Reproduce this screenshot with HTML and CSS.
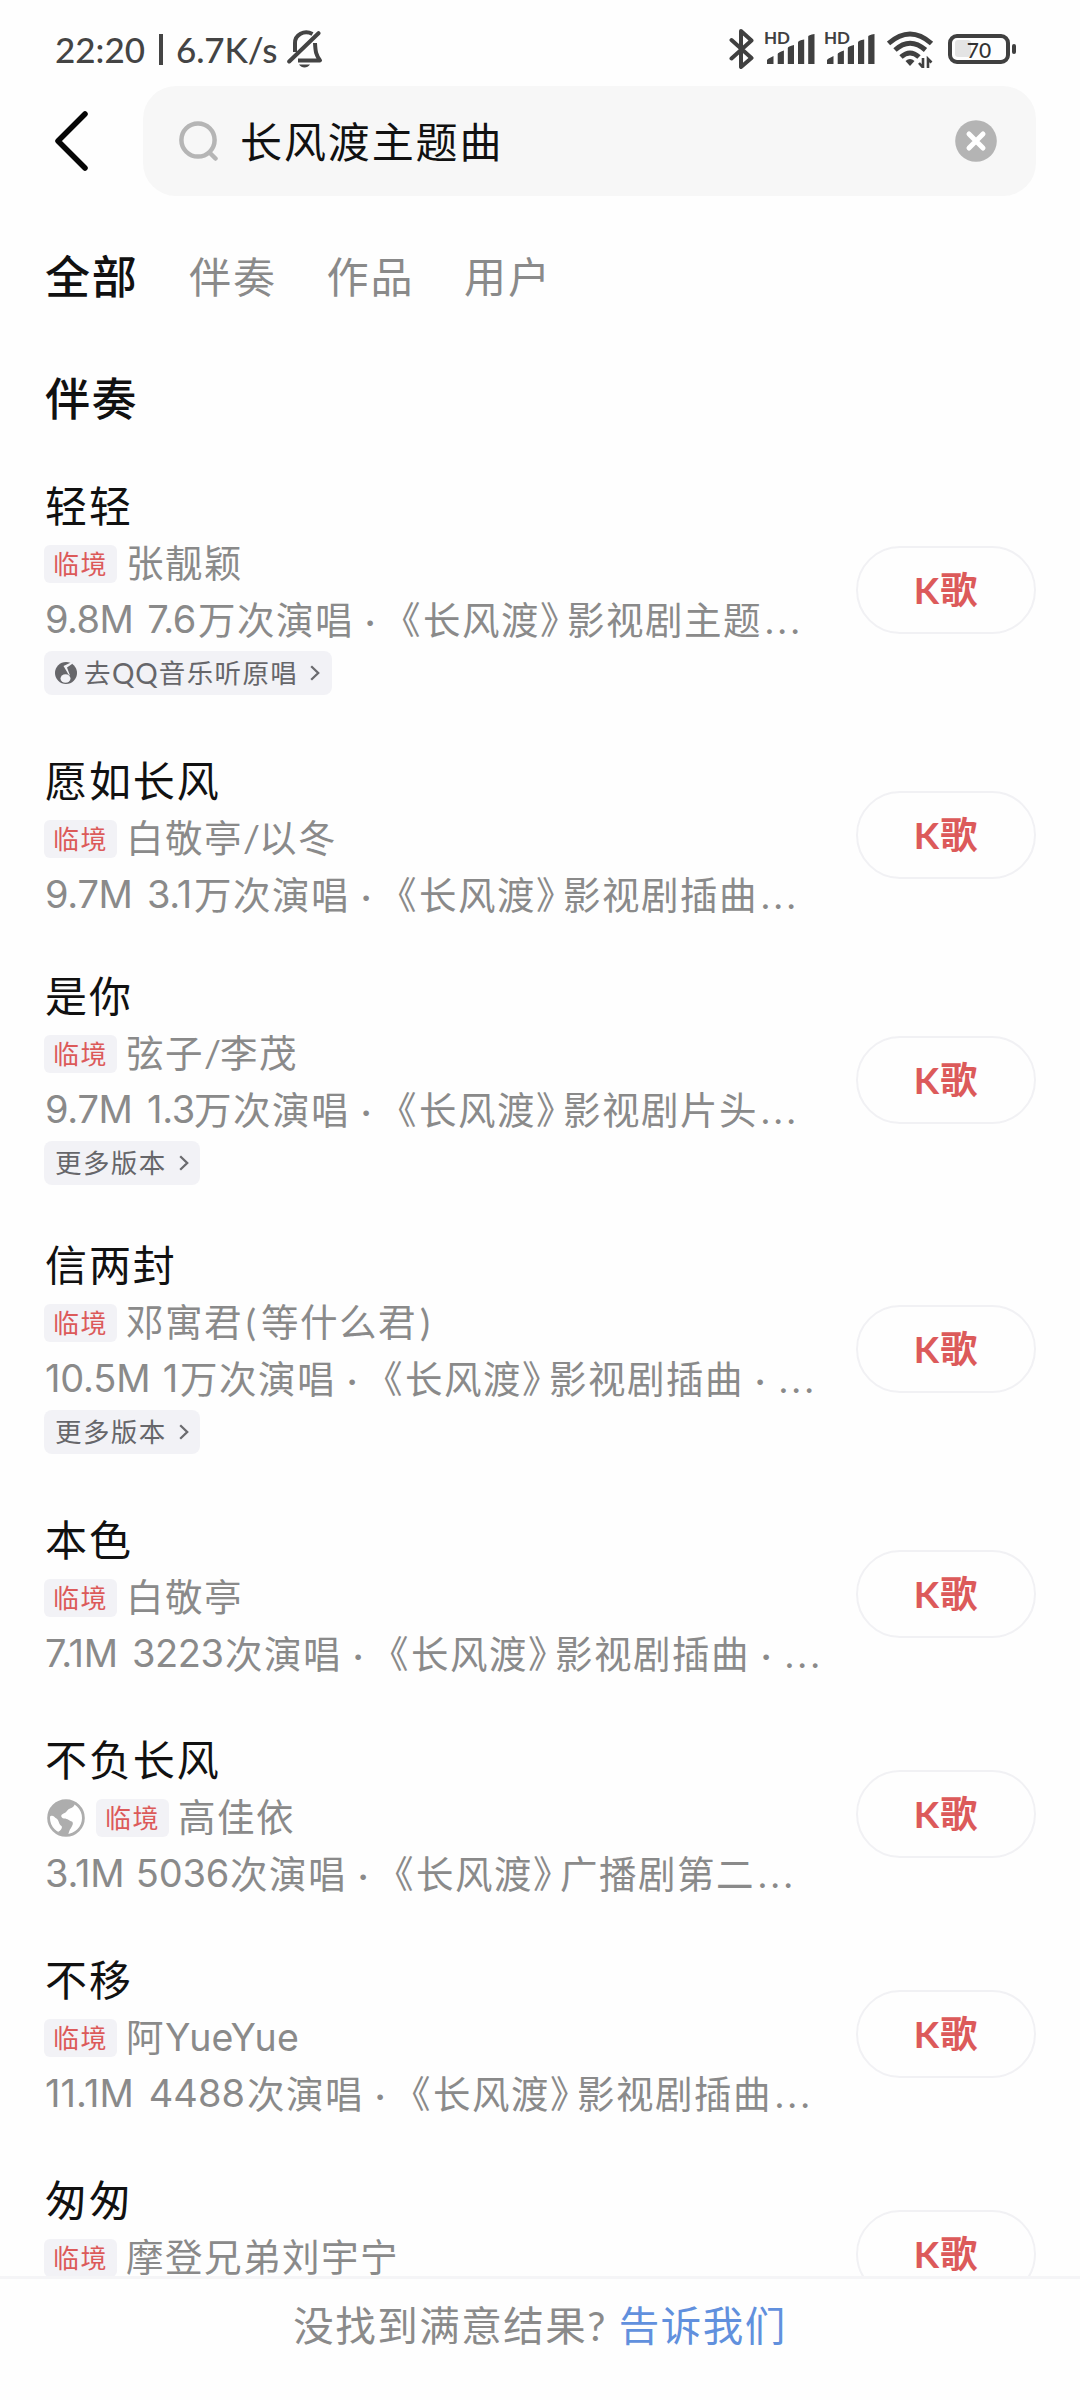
FILE: index.html
```html
<!DOCTYPE html>
<html lang="zh-CN">
<head>
<meta charset="utf-8">
<title>长风渡主题曲</title>
<link rel="stylesheet" href="styles.css">
</head>
<body>
<svg class="defs" width="0" height="0" aria-hidden="true">
  <symbol id="bars" viewBox="0 0 48 30">
    <path d="M0 30V26Q0 25 6.500 22V30ZM10.700 30V20Q10.700 18.500 16.900 16.500V30ZM20.800 30V14Q20.800 12.500 27 11V30ZM31 30V8.500Q31 6.500 37.200 5.500V30ZM41.200 30V2.500Q41.200 1 47.500 0V30Z" fill="#404040"/>
  </symbol>
  <symbol id="chev" viewBox="0 0 10 16"><path d="M1.200 1.200L8.200 8L1.200 14.800" fill="none" stroke="#6b6b6f" stroke-width="2.300"/></symbol>
</svg>
<div class="screen">
  <header class="status">
    <span class="clock">22:20</span><span class="bar"></span><span class="speed">6.7K/s</span>
    <svg class="bell" width="36" height="38" viewBox="0 0 36 38" fill="none" stroke="#444" stroke-width="4">
      <path d="M2.200 31.500L31.500 3.200" stroke-linecap="round"/>
      <path d="M8 22V13C8 5 17 -.5 25.500 4"/>
      <path d="M28 13C28.500 22 29 25 33 30.500H11" stroke-linejoin="round"/>
      <path d="M12 34.500H23C20.500 38.500 14.500 38.500 12 34.500Z" fill="#444" stroke="none"/>
    </svg>
    <span class="fill"></span>
    <svg class="bt" width="26" height="40" viewBox="0 0 26 40" fill="none" stroke="#404040" stroke-width="4" stroke-linejoin="round" stroke-linecap="round"><path d="M2.500 11L22.500 29L12 38V2L22.500 11.500L2.500 29.500"/></svg>
    <span class="signal"><b class="hd">HD</b><svg width="48" height="30"><use href="#bars"/></svg></span>
    <span class="signal"><b class="hd">HD</b><svg width="48" height="30"><use href="#bars"/></svg></span>
    <svg class="wifi" width="47" height="37" viewBox="0 0 47 37" fill="none" stroke="#404040" stroke-width="5">
      <path d="M1.500 12.500Q23 -6.500 44.500 12.500"/><path d="M8 19Q23 5.500 38.500 19"/><path d="M14 26Q23 18 32 26"/>
      <path d="M18.500 30Q23 26 27.500 30L23 35Z" fill="#404040" stroke="none"/>
      <path d="M36 27V36.500L32 32M41 37V28L44.500 31.500" stroke-width="2.600"/>
    </svg>
    <span class="battery"><i class="level"></i><b class="pct">70</b></span><i class="nub"></i>
  </header>

  <div class="searchbar">
    <svg class="back" width="36" height="62" viewBox="0 0 36 62"><path d="M31 4L4 31L31 58" fill="none" stroke="#060606" stroke-width="5.500" stroke-linecap="round" stroke-linejoin="round"/></svg>
    <div class="field">
      <svg width="40" height="40" viewBox="0 0 40 40" fill="none" stroke="#b5b5b5" stroke-width="4.500" stroke-linecap="round"><circle cx="19" cy="19" r="16.600"/><path d="M31 32L36.500 37.500"/></svg>
      <span class="query">长风渡主题曲</span>
      <svg width="42" height="42" viewBox="0 0 42 42"><circle cx="21" cy="21" r="20.800" fill="#b4b4b4"/><path d="M14 14L28 28M28 14L14 28" stroke="#fff" stroke-width="5" stroke-linecap="round"/></svg>
    </div>
  </div>

  <nav class="tabs"><span class="tab active">全部</span><span class="tab">伴奏</span><span class="tab">作品</span><span class="tab">用户</span></nav>
  <h2 class="section">伴奏</h2>

  <main class="list">
    <article class="item linked near">
      <div class="info">
        <h3 class="title">轻轻</h3>
        <div class="singer"><span class="badge">临境</span><span>张靓颖</span></div>
        <p class="meta"><span class="num a">9.8M 7.6</span>万次演唱<span class="dot">·</span><span class="lq">《</span>长风渡<span class="rq">》</span>影视剧主题<span class="more">...</span></p>
        <span class="link"><svg class="qq" width="22" height="22" viewBox="0 0 22 22"><circle cx="11" cy="11" r="11" fill="#66666a"/><path d="M17 0L8.500 4L13.500 12.500L15 13.500L12 5.500L17 2Z" fill="#f2f2f6"/><ellipse cx="10.500" cy="16.500" rx="5" ry="4.300" fill="#f2f2f6"/></svg>去<span class="lat">QQ</span>音乐听原唱<svg class="chev" width="10" height="16"><use href="#chev"/></svg></span>
      </div>
      <button class="sing">K歌</button>
    </article>
    <article class="item near">
      <div class="info">
        <h3 class="title">愿如长风</h3>
        <div class="singer"><span class="badge">临境</span><span>白敬亭<span class="slash">/</span>以冬</span></div>
        <p class="meta"><span class="num b">9.7M 3.1</span>万次演唱<span class="dot">·</span><span class="lq">《</span>长风渡<span class="rq">》</span>影视剧插曲<span class="more">...</span></p>
      </div>
      <button class="sing">K歌</button>
    </article>
    <article class="item linked close">
      <div class="info">
        <h3 class="title">是你</h3>
        <div class="singer"><span class="badge">临境</span><span>弦子<span class="slash">/</span>李茂</span></div>
        <p class="meta"><span class="num b">9.7M 1.3</span>万次演唱<span class="dot">·</span><span class="lq">《</span>长风渡<span class="rq">》</span>影视剧片头<span class="more">...</span></p>
        <span class="link more-link">更多版本<svg class="chev" width="10" height="16"><use href="#chev"/></svg></span>
      </div>
      <button class="sing">K歌</button>
    </article>
    <article class="item linked near">
      <div class="info">
        <h3 class="title">信两封</h3>
        <div class="singer"><span class="badge">临境</span><span>邓寓君<span class="paren">(</span>等什么君<span class="paren">)</span></span></div>
        <p class="meta"><span class="num c">10.5M 1</span>万次演唱<span class="dot">·</span><span class="lq">《</span>长风渡<span class="rq">》</span>影视剧插曲<span class="dot">·</span><span class="more">...</span></p>
        <span class="link more-link">更多版本<svg class="chev" width="10" height="16"><use href="#chev"/></svg></span>
      </div>
      <button class="sing">K歌</button>
    </article>
    <article class="item">
      <div class="info">
        <h3 class="title">本色</h3>
        <div class="singer"><span class="badge">临境</span><span>白敬亭</span></div>
        <p class="meta"><span class="num d">7.1M 3223</span>次演唱<span class="dot">·</span><span class="lq">《</span>长风渡<span class="rq">》</span>影视剧插曲<span class="dot">·</span><span class="more">...</span></p>
      </div>
      <button class="sing">K歌</button>
    </article>
    <article class="item">
      <div class="info">
        <h3 class="title">不负长风</h3>
        <div class="singer"><svg class="globe" width="38" height="38" viewBox="0 0 38 38"><circle cx="19" cy="19" r="17.400" fill="#fff" stroke="#adadad" stroke-width="2.800"/><path d="M2 18C2 8 9 1.500 18 1.500C23 1.500 26 3 28 4.500Q27 8.500 23 9.500C20 10.500 20 13.500 16.500 14.500C13 16 14 19 17 19.500C21 19.500 22 22 25 22.500C27 24.500 25 27 24 29C22 31 22 35 20 37Q14 36 11 33C13 32 16 29 14.500 27C11.500 25 12 21 9.500 19.500C7 18 6 15 2 18Z" fill="#adadad"/></svg><span class="badge">临境</span><span>高佳依</span></div>
        <p class="meta"><span class="num e">3.1M 5036</span>次演唱<span class="dot">·</span><span class="lq">《</span>长风渡<span class="rq">》</span>广播剧第二<span class="more">...</span></p>
      </div>
      <button class="sing">K歌</button>
    </article>
    <article class="item">
      <div class="info">
        <h3 class="title">不移</h3>
        <div class="singer"><span class="badge">临境</span><span>阿<span class="latin-name">YueYue</span></span></div>
        <p class="meta"><span class="num f">11.1M 4488</span>次演唱<span class="dot">·</span><span class="lq">《</span>长风渡<span class="rq">》</span>影视剧插曲<span class="more">...</span></p>
      </div>
      <button class="sing">K歌</button>
    </article>
    <article class="item">
      <div class="info">
        <h3 class="title">匆匆</h3>
        <div class="singer"><span class="badge">临境</span><span>摩登兄弟刘宇宁</span></div>
        <p class="meta"></p>
      </div>
      <button class="sing">K歌</button>
    </article>
  </main>

  <footer class="feedback"><span>没找到满意结果<span class="q">?</span></span><a class="tell">告诉我们</a></footer>
</div>
</body>
</html>
```
FILE: styles.css
```css
* { box-sizing: border-box; margin: 0; padding: 0; }
body { background: #fefefe; font-family: Lato, "Noto Sans CJK SC", sans-serif; color: #111; }
.defs { display: block; position: absolute; }
.screen { width: 1080px; height: 2400px; overflow: hidden; display: flex; flex-direction: column; background: #fefefe; }
svg { flex: none; display: block; }

.status { height: 86px; padding: 12px 70px 0 55px; display: flex; align-items: center; flex: none; color: #444; font-size: 35px; font-weight: 500; line-height: 40px; white-space: nowrap; }
.clock { width: 104px; }
.bar { width: 4px; height: 31px; background: #444; margin-right: 13px; }
.speed { width: 111px; letter-spacing: -.1px; }
.fill { flex: 1; }
.bt { margin-right: 12px; }
.signal { position: relative; width: 50px; height: 36px; margin-right: 10px; display: flex; align-items: flex-end; padding-bottom: 3px; }
.hd { position: absolute; left: -3px; top: 0; font-size: 17px; line-height: 13px; font-weight: 700; color: #404040; }
.wifi { margin-right: 14px; }
.battery { position: relative; width: 62px; height: 30px; border: 4.500px solid #404040; border-radius: 9px; display: flex; justify-content: center; align-items: center; }
.level { position: absolute; left: 3px; top: 2px; width: 16px; height: 17px; border-radius: 3px; background: #e4e4e4; }
.pct { position: relative; font-size: 21px; line-height: 21px; font-weight: 500; color: #333; }
.nub { width: 4px; height: 10px; margin-left: 2px; margin-right: -6px; border-radius: 2px; background: #404040; }

.searchbar { height: 110px; padding: 0 44px 0 54px; display: flex; align-items: center; flex: none; }
.back { margin-right: 53px; }
.field { flex: 1; height: 110px; border-radius: 33px; background: #f7f7f7; display: flex; align-items: center; padding: 0 39px 0 36px; }
.query { flex: 1; padding-left: 21px; padding-top: 1px; font-size: 42px; letter-spacing: 1.900px; line-height: 60px; }

.tabs { height: 62px; margin-top: 50px; padding-left: 45px; display: flex; align-items: center; flex: none; font-size: 42px; letter-spacing: 1.900px; line-height: 60px; color: #8a8a8a; }
.tab { width: 137.500px; }
.tab.active { width: 144px; font-size: 45px; font-weight: 500; letter-spacing: 1.800px; color: #111; }
.section { margin: 60px 0 0 45px; flex: none; font-size: 45px; font-weight: 500; letter-spacing: 1.500px; line-height: 62px; }

.list { flex: none; height: 1797px; margin-top: 49px; padding: 0 44px; overflow: hidden; display: flex; flex-direction: column; }
.item { flex: none; display: flex; align-items: center; justify-content: space-between; margin-bottom: 58px; }
.item.near { margin-bottom: 53px; }
.item.close { margin-bottom: 47px; }
.linked .info { height: 222px; }
.info { height: 162px; white-space: nowrap; }
.title { font-size: 42px; font-weight: 400; letter-spacing: 1.900px; line-height: 55px; padding-left: 1px; }
.singer { height: 38px; margin-top: 11px; display: flex; align-items: center; font-size: 37.500px; letter-spacing: 1.500px; line-height: 36px; color: #8a8a8a; }
.singer > span { height: 38px; }
.badge { width: 73px; margin-right: 9px; border-radius: 6px; background: #f2f2f6; color: #dc5a5a; font-size: 26px; letter-spacing: 1.500px; line-height: 38px; padding-left: 9px; }
.globe { margin: 0 11px 0 3px; }
.slash { letter-spacing: -1px; }
.paren { padding: 0 3.500px 0 3px; }
.latin-name { font-family: Inter, sans-serif; letter-spacing: .2px; }
.meta { margin-top: 14px; height: 45px; font-size: 37.500px; letter-spacing: 1.500px; line-height: 45px; color: #8a8a8a; display: flex; }
.num { flex: none; font-family: Inter, sans-serif; font-size: 38px; letter-spacing: -.2px; padding-left: 1px; }
.a { width: 154px; letter-spacing: -.6px; word-spacing: 4px; }
.b { width: 150px; letter-spacing: -.3px; word-spacing: 4px; }
.c { width: 136px; word-spacing: 2px; }
.d { width: 181px; letter-spacing: -.4px; word-spacing: 4px; }
.e { width: 186px; word-spacing: 1px; }
.f { width: 203px; letter-spacing: .1px; word-spacing: 4px; }
.dot { width: 32px; text-align: center; letter-spacing: 0; }
.lq { margin: 0 1px 0 -3px; }
.rq { margin-right: -12px; }
.more { letter-spacing: 4px; padding-left: 3px; }
.link { display: inline-flex; align-items: center; height: 44px; margin-top: 9px; padding: 0 12px 0 11px; border-radius: 8px; background: #f2f2f6; color: #66666a; font-size: 26.500px; letter-spacing: 1.400px; line-height: 44px; }
.more-link { padding: 0 11px; }
.qq { margin-right: 7px; }
.lat { font-size: 28px; letter-spacing: 1px; }
.chev { margin-left: 12px; }
.sing { width: 180px; height: 88px; border: 2.500px solid #f1f1f4; border-radius: 44px; background: transparent; color: #dc5a5a; font: 700 37px/80px Lato, "Noto Sans CJK SC", sans-serif; letter-spacing: 1px; }

.feedback { flex: 1; border-top: 3px solid #f5f5f7; display: flex; justify-content: center; padding-top: 17px; font-size: 40.500px; letter-spacing: 1.500px; line-height: 60px; color: #8a8a8a; }
.tell { margin-left: 12px; color: #6190dd; }
```
